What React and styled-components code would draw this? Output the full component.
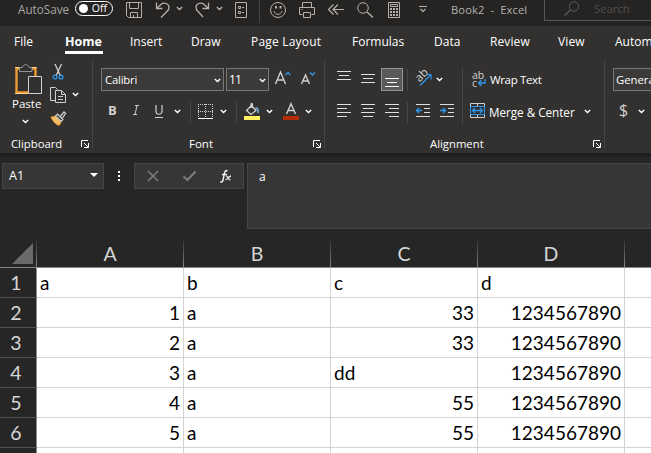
import React from "react";
import styled, { createGlobalStyle } from "styled-components";

const Global = createGlobalStyle`
  * { box-sizing: border-box; }
  body { margin: 0; background: #262626; overflow: hidden; }
`;

const Window = styled.div`
  width: 651px;
  height: 453px;
  overflow: hidden;
  display: flex;
  flex-direction: column;
  background: #262626;
  color: #fff;
  font-family: "Open Sans", "Noto Sans", sans-serif;
  font-size: 12px;
`;

const Row = styled.div`
  display: flex;
  align-items: flex-start;
  flex: none;
  height: ${(p) => (p.$h ? `${p.$h}px` : "auto")};
  margin-top: ${(p) => p.$top || 0}px;
  padding-left: ${(p) => p.$pad || 0}px;
`;

const Glyph = styled.svg`
  display: block;
  flex: none;
  overflow: visible;
  margin-left: ${(p) => p.$gap || 0}px;
  margin-top: ${(p) => p.$top || 0}px;
  fill: none;
  stroke: ${(p) => p.$color || "#d2d0ce"};
  stroke-width: 1;
`;

const Label = styled.span`
  flex: none;
  width: ${(p) => p.$w}px;
  margin-left: ${(p) => p.$gap || 0}px;
  margin-top: ${(p) => p.$top || 0}px;
  height: 18px;
  line-height: 18px;
  white-space: pre;
  color: ${(p) => p.$color || "#fff"};
  font-size: ${(p) => p.$size || 12}px;
  font-weight: ${(p) => p.$weight || 400};
  letter-spacing: ${(p) => p.$track || 0}px;
`;

const Rule = styled.div`
  flex: none;
  width: 1px;
  height: ${(p) => p.$h}px;
  margin-left: ${(p) => p.$gap || 0}px;
  margin-top: ${(p) => p.$top || 0}px;
  background: #484644;
`;

/* Title bar */
const TitleBar = styled.header`
  display: flex;
  flex: none;
  height: 26px;
  padding-left: 18px;
  background: #252423;
`;

const Toggle = styled.div`
  flex: none;
  width: 38px;
  height: 15px;
  margin: 1px 0 0 7px;
  padding: 0 5px 0 3px;
  border: 1px solid #fff;
  border-radius: 8px;
  display: flex;
  align-items: center;
  justify-content: space-between;
  font-size: 10.5px;
  font-weight: 500;
  line-height: 13px;
`;

const Knob = styled.i`
  width: 9px;
  height: 9px;
  border-radius: 50%;
  background: #fff;
`;

const SearchBox = styled.div`
  display: flex;
  flex: none;
  width: 110px;
  height: 21px;
  margin-left: 15px;
  border-left: 1px solid #575655;
  border-bottom: 1px solid #575655;
`;

/* Ribbon */
const Ribbon = styled.section`
  flex: none;
  height: 127px;
  background: #323130;
  overflow: hidden;
`;

const Tabs = styled.nav`
  display: flex;
  height: 33px;
  padding: 7px 0 0 14px;
`;

const Tab = styled.span`
  flex: none;
  width: ${(p) => p.$w}px;
  margin-right: ${(p) => p.$gap}px;
  height: 21px;
  line-height: 18px;
  font-size: ${(p) => (p.$active ? 12.5 : 12)}px;
  white-space: nowrap;
  letter-spacing: ${(p) => p.$track || 0}px;
  font-weight: ${(p) => (p.$active ? 700 : 400)};
  border-bottom: ${(p) => (p.$active ? "3px solid #fff" : "none")};
`;

const Groups = styled.div`
  display: flex;
  height: 94px;
`;

const Group = styled.div`
  flex: none;
  width: ${(p) => p.$w}px;
  height: 94px;
  display: flex;
  flex-direction: column;
`;

const Caption = styled.div`
  display: flex;
  height: 18px;
  margin-top: auto;
`;

const PasteButton = styled.div`
  flex: none;
  width: 36px;
  margin-left: 8px;
`;

const ClipTools = styled.div`
  flex: none;
  width: 34px;
  margin-left: 6px;
`;

const AlignmentTools = styled.div`
  flex: none;
  width: ${(p) => p.$w}px;
  height: 67px;
`;

const Combo = styled.div`
  display: flex;
  flex: none;
  width: ${(p) => p.$w}px;
  height: 23px;
  margin-left: ${(p) => p.$gap}px;
  margin-top: 9px;
  border: 1px solid #797775;
  background: #3b3a39;
`;

const Pressed = styled.div`
  flex: none;
  width: 22px;
  height: 23px;
  margin: 9px 0 0 6px;
  border: 1px solid #979593;
  background: #5b5a58;
`;

/* Formula bar */
const FormulaBar = styled.section`
  display: flex;
  flex: none;
  height: 87px;
  padding: 10px 0 0 2px;
  background: linear-gradient(#1b1b1b 0, #212121 3px, #262626 7px);
`;

const Field = styled.div`
  display: flex;
  flex: none;
  width: ${(p) => p.$w}px;
  height: ${(p) => p.$h}px;
  margin-left: ${(p) => p.$gap || 0}px;
  border: 1px solid #464646;
  background: #363636;
`;

/* Sheet */
const Sheet = styled.main`
  flex: none;
  display: grid;
  grid-template-columns: 37px 147px 147px 147px 147px 30px;
  grid-template-rows: 28px repeat(7, 30px);
  height: 213px;
  overflow: hidden;
  font-family: "Lato", sans-serif;
  font-size: 19px;
`;

const ColumnHead = styled.div`
  line-height: 28px;
  height: 28px;
  text-align: center;
  color: #d6d6d6;
  font-size: 19.5px;
  border-right: 1px solid;
  border-bottom: 1px solid;
  border-image: linear-gradient(#303030, #888) 1;
`;

const RowHead = styled.div`
  line-height: 29px;
  text-align: center;
  padding-right: 4px;
  color: #d6d6d6;
  font-size: 19.5px;
  background: #262626;
  border-right: 1px solid #8a8a8a;
  border-bottom: 1px solid #505050;
`;

const Cell = styled.div`
  line-height: 29px;
  padding: 0 3px;
  color: #000;
  background: #fff;
  text-align: ${(p) => (p.$number ? "right" : "left")};
  border-right: 1px solid #d4d4d4;
  border-bottom: 1px solid #d4d4d4;
`;

const Chevron = ({ gap, top, color = "#fff" }) => (
  <Glyph $gap={gap} $top={top} $color={color} width="7" height="5" viewBox="0 0 7 5">
    <path d="M.8 1l2.700 2.500L6.200 1" strokeWidth="1.4" />
  </Glyph>
);

const Launcher = ({ gap }) => (
  <Glyph $gap={gap} $top={5} $color="#fff" width="8" height="8" viewBox="0 0 8 8">
    <path d="M.5 7V.5H7M3 3l4 4M7.500 3v4.500H3" />
  </Glyph>
);

const Lines = ({ rows, gap, top, color = "#e1dfdd" }) => (
  <Glyph $gap={gap} $top={top} $color={color} width="14" height="14" viewBox="0 0 14 14">
    <path d={rows.map(([x, y, w]) => `M${x} ${y + 0.5}h${w}`).join("")} />
  </Glyph>
);

const LEFT = [[0, 0, 14], [0, 4, 10], [0, 8, 14], [0, 12, 10]];
const CENTER = [[0, 0, 14], [2, 4, 10], [0, 8, 14], [2, 12, 10]];
const RIGHT = [[0, 0, 14], [4, 4, 10], [0, 8, 14], [4, 12, 10]];
const STACK = [[0, 0, 14], [2, 4, 10], [0, 8, 14]];

const Indent = ({ gap, right }) => (
  <Glyph $gap={gap} $top={5} width="14" height="14" viewBox="0 0 14 14">
    <path d="M0 .5h14M8 4.500h6M8 8.500h6M0 12.500h14" stroke="#e1dfdd" />
    <path
      d={right ? "M0 6.500h5M3 4l2.500 2.500L3 9" : "M1 6.500h5M3 4L.5 6.500 3 9"}
      stroke="#2f96ea"
      strokeWidth="1.4"
    />
  </Glyph>
);

const ROWS = [
  ["a", "b", "c", "d"],
  [1, "a", 33, 1234567890],
  [2, "a", 33, 1234567890],
  [3, "a", "dd", 1234567890],
  [4, "a", 55, 1234567890],
  [5, "a", 55, 1234567890],
  ["", "", "", ""],
];

const TABS = [
  ["File", 19, 32, 0],
  ["Home", 38, 27, 0],
  ["Insert", 32, 29, 0],
  ["Draw", 30, 30, 0],
  ["Page Layout", 71, 30, 0.2],
  ["Formulas", 54, 28, 0],
  ["Data", 27, 29, 0],
  ["Review", 41, 27, 0.1],
  ["View", 28, 29, 0.1],
  ["Automate", 60, 0, 0],
];

function QuickAccess() {
  const c = "#b3b0ad";
  return (
    <TitleBar>
      <Label $w={50} $color="#a6a5a4" $size={11.700}>AutoSave</Label>
      <Toggle><Knob />Off</Toggle>
      <Glyph $gap={13} $top={2} $color={c} width="16" height="16" viewBox="0 0 16 16">
        <path d="M.5.5h15v15H2.500l-2-2zM3.500.5v6h9v-6M4.500 15.500v-5h7v5M7.500 13v2.500" />
      </Glyph>
      <Glyph $gap={13} $top={2} $color={c} width="16" height="16" viewBox="0 0 16 16">
        <path d="M1.500.5v6h6M2 6l4-3.600c3-2.600 8-.8 8 3.100 0 1.500-.6 2.500-1.600 3.500L6 15.500" strokeWidth="1.3" />
      </Glyph>
      <Chevron gap={5} top={6} color={c} />
      <Glyph $gap={12} $top={2} $color={c} width="16" height="16" viewBox="0 0 16 16">
        <path d="M13.500.5v6h-6M13 6L9 2.400C6 -.2 1 1.600 1 5.500c0 1.500.6 2.500 1.600 3.500L8 15" strokeWidth="1.3" />
      </Glyph>
      <Chevron gap={5} top={6} color={c} />
      <Glyph $gap={12} $top={2} $color={c} width="12" height="16" viewBox="0 0 12 16">
        <path d="M.5.5h11v15H.5zM3.500 4.500h2v2h-2zM3.500 9.500h2v2h-2zM7 5.500h2M7 10.500h2" />
      </Glyph>
      <Rule $h={23} $gap={12} />
      <Glyph $gap={10} $top={2} $color={c} width="16" height="16" viewBox="0 0 16 16">
        <circle cx="8" cy="8" r="7.500" />
        <path d="M4 9c1 4.500 7 4.500 8 0" />
        <path d="M5 4h2v2.500H5zM9.500 4h2v2.500h-2z" fill={c} stroke="none" />
      </Glyph>
      <Glyph $gap={13} $top={2} $color={c} width="16" height="16" viewBox="0 0 16 16">
        <path d="M3.500 5.500v-5h9v5M3.500 12.500h-3v-7h15v7h-3M4.500 10.500h7v5h-7zM2.500 7.500h1" />
      </Glyph>
      <Glyph $gap={13} $top={4} $color={c} width="16" height="12" viewBox="0 0 16 12">
        <path d="M16 5.500H5M5.500.5l-5 5 5 5M10 .5l-5 5 5 5" strokeWidth="1.2" />
      </Glyph>
      <Glyph $gap={13} $top={2} $color={c} width="16" height="16" viewBox="0 0 16 16">
        <circle cx="6" cy="6" r="5.300" />
        <path d="M10 10l6 5.500" strokeWidth="1.5" />
      </Glyph>
      <Glyph $gap={15} $top={2} $color={c} width="12" height="16" viewBox="0 0 12 16">
        <path d="M.5.5h11v15H.5zM2.500 2.500h7v2h-7z" />
        <path d="M2 7h8M2 10h8M2 13h8" strokeWidth="2" strokeDasharray="2 1" />
      </Glyph>
      <Glyph $gap={19} $top={6} $color={c} width="8" height="7" viewBox="0 0 8 7">
        <path d="M0 .5h8M1.500 3L4 5.500 6.500 3" strokeWidth="1.2" />
      </Glyph>
      <Label $w={78} $gap={24} $top={1} $color="#b3b0ad" $size={11.200} $track={0.1}>Book2  -  Excel</Label>
      <SearchBox>
        <Glyph $gap={20} $top={1} $color="#5d5b59" width="16" height="16" viewBox="0 0 16 16">
          <circle cx="9" cy="5.500" r="4.700" />
          <path d="M5.500 9l-6 5.500" strokeWidth="1.300" />
        </Glyph>
        <Label $w={36} $gap={13} $color="#504e4c" $size={11.300}>Search</Label>
      </SearchBox>
    </TitleBar>
  );
}

function Clipboard() {
  return (
    <Group $w={92}>
      <Row>
        <PasteButton>
          <Glyph $gap={7} $top={5} width="28" height="30" viewBox="0 0 28 30">
            <path d="M5 4.500H1.500v24H13M17 4.500h3.500V12" stroke="#ed9b33" strokeWidth="2.4" />
            <path d="M0 3.500h5M17 3.500h4.500M0 29.500h13" stroke="#ffd991" />
            <path d="M4.500 7.500v-4h3C8-.3 13.500-.3 14 3.500h3v4z" stroke="#979593" fill="#323130" />
            <path d="M13.500 12.500h13v17h-13z" fill="#323130" stroke="#d2d0ce" />
          </Glyph>
          <Label as="div" $w={30} $gap={4} $top={1} $size={11.500}>Paste</Label>
          <Chevron gap={14} top={6} />
        </PasteButton>
        <ClipTools>
          <Glyph $gap={3} $top={5} width="11" height="16" viewBox="0 0 11 16">
            <path d="M2 0l5.500 12M8.500 0L3 12" strokeWidth="1.3" />
            <circle cx="2" cy="13" r="1.900" stroke="#2f96ea" strokeWidth="1.3" />
            <circle cx="8" cy="13" r="1.900" stroke="#2f96ea" strokeWidth="1.3" />
          </Glyph>
          <Row>
            <Glyph $top={7} width="16" height="16" viewBox="0 0 16 16">
              <path d="M5 13.500H.5V.5h5l2 2M5.500 3.500h6l4 4v8h-10zM11.500 3.500v4h4M8 9.500h5M8 12.500h5" />
            </Glyph>
            <Chevron gap={6} top={12} />
          </Row>
          <Glyph $gap={1} $top={8} width="16" height="16" viewBox="0 0 16 16">
            <path d="M0 6l4.500-.5 5.500 5.800L8 14.500C4 13 1.500 9.500 0 6z" fill="#f4bd68" stroke="#ed9b33" />
            <path d="M4.500 5l2-2L12 8.500l-2 2zM9.500 5L13 .8l1.700 1.500L11.500 7" strokeWidth="1.2" fill="#484644" />
          </Glyph>
        </ClipTools>
      </Row>
      <Caption>
        <Label $w={51} $gap={11} $size={11.300} $weight={500}>Clipboard</Label>
        <Launcher gap={19} />
      </Caption>
    </Group>
  );
}

function FontGroup() {
  return (
    <Group $w={231}>
      <Row $h={39}>
        <Combo $w={123} $gap={8}>
          <Label $w={40} $gap={3} $top={2} $size={11.300} $track={-0.2}>Calibri</Label>
          <Chevron gap={69} top={9} />
        </Combo>
        <Combo $w={43} $gap={2}>
          <Label $w={15} $gap={2} $top={2} $size={12} $track={-0.8}>11</Label>
          <Chevron gap={15} top={9} />
        </Combo>
        <Glyph $gap={6} $top={12} width="15" height="14" viewBox="0 0 15 14">
          <path d="M.5 13L5.500 1l5 12M2.500 9h6" strokeWidth="1.4" />
          <path d="M10.500 4L13 1.500 15.500 4" stroke="#2f96ea" strokeWidth="1.4" />
        </Glyph>
        <Glyph $gap={11} $top={12} width="14" height="14" viewBox="0 0 14 14">
          <path d="M.5 13L4.500 4l4 9M2 10h5" strokeWidth="1.4" />
          <path d="M9 1.500L11.500 4 14 1.500" stroke="#2f96ea" strokeWidth="1.4" />
        </Glyph>
      </Row>
      <Row $h={30} $pad={15}>
        <Label $w={10} $top={3} $size={13} $weight={700} $color="#d2d0ce">B</Label>
        <Glyph $gap={15} $top={7} width="6" height="10" viewBox="0 0 6 10">
          <path d="M2 .5h4M0 9.500h4M4 .5l-2 9" />
        </Glyph>
        <Glyph $gap={16} $top={7} width="8" height="13" viewBox="0 0 8 13">
          <path d="M1 0v6c0 4.300 6 4.300 6 0V0M0 12.500h8" strokeWidth="1.200" />
        </Glyph>
        <Chevron gap={11} top={11} />
        <Rule $h={21} $gap={9} $top={4} />
        <Glyph $gap={7} $top={6} width="15" height="15" viewBox="0 0 15 15">
          <path d="M0 .5h15M0 7.500h15M.5 0v14M7.500 0v14M14.500 0v14" strokeDasharray="1 1" />
          <path d="M0 14.500h15" stroke="#fff" />
        </Glyph>
        <Chevron gap={7} top={11} />
        <Rule $h={21} $gap={9} $top={4} />
        <Glyph $gap={7} $top={5} width="16" height="17" viewBox="0 0 16 17">
          <path d="M2.500 7.500l5-5 4.500 5-5 4zM7 5V1.500c0-1 1.500-1 1.500 0V5" strokeWidth="1.3" />
          <path d="M11.500 5c2.500-.2 3 2 2.500 5" stroke="#6c9fcb" strokeWidth="2" />
          <path d="M0 13h16v4H0z" fill="#fff160" stroke="none" />
        </Glyph>
        <Chevron gap={6} top={11} />
        <Glyph $gap={10} $top={5} width="16" height="17" viewBox="0 0 16 17">
          <path d="M3.500 11L8 .8 12.500 11M5 7.500h6" strokeWidth="1.4" />
          <path d="M0 13h16v4H0z" fill="#b32d07" stroke="none" />
        </Glyph>
        <Chevron gap={6} top={11} />
      </Row>
      <Caption>
        <Label $w={24} $gap={96} $size={11.500} $weight={500}>Font</Label>
        <Launcher gap={100} />
      </Caption>
    </Group>
  );
}

function AlignmentGroup() {
  return (
    <Group $w={279}>
      <Row>
        <AlignmentTools $w={137}>
          <Row $h={39}>
            <Lines rows={STACK} gap={12} top={12} />
            <Lines rows={STACK} gap={10} top={15} />
            <Pressed><Lines rows={STACK} gap={3} top={9} color="#fff" /></Pressed>
            <Rule $h={22} $gap={4} $top={10} />
            <Glyph $gap={7} $top={11} width="17" height="16" viewBox="0 0 17 16">
              <text transform="translate(4.500 12.500) rotate(-45)" fill="#d2d0ce" stroke="none" fontSize="11.500">ab</text>
              <path d="M5 15.500L15.500 5M11 4.500h5v5" stroke="#2f96ea" strokeWidth="1.2" />
            </Glyph>
            <Chevron gap={4} top={18} />
          </Row>
          <Row $h={28}>
            <Lines rows={LEFT} gap={12} top={6} />
            <Lines rows={CENTER} gap={10} top={6} />
            <Lines rows={RIGHT} gap={10} top={6} />
            <Rule $h={21} $gap={8} $top={4} />
            <Row $top={1}>
              <Indent gap={8} />
              <Indent gap={10} right />
            </Row>
          </Row>
        </AlignmentTools>
        <Rule $h={58} $top={8} />
        <AlignmentTools $w={138}>
          <Row $h={39}>
            <Glyph $gap={9} $top={13} width="14" height="16" viewBox="0 0 14 16">
              <text x="0" y="7" fill="#d2d0ce" stroke="none" fontSize="10.500">ab</text>
              <text x="0" y="14.500" fill="#d2d0ce" stroke="none" fontSize="10.500">c</text>
              <path d="M13 7v4H7M9.500 8L6.500 11l3 3" stroke="#2f96ea" strokeWidth="1.4" />
            </Glyph>
            <Label $w={54} $gap={4} $top={12} $size={11.500} $track={-0.35}>Wrap Text</Label>
          </Row>
          <Row $h={28}>
            <Glyph $gap={7} $top={5} width="15" height="15" viewBox="0 0 15 15">
              <path d="M.5.5h14v14H.5zM7.500 0v3M7.500 12v3" />
              <path d="M.5 3.500h14v8H.5z" fill="#323130" stroke="#2f96ea" />
              <path d="M2.500 7.500h10M5 5L2.500 7.500 5 10M10 5l2.500 2.500L10 10" stroke="#2f96ea" strokeWidth="1.3" />
            </Glyph>
            <Label $w={86} $gap={4} $top={5} $size={11.700} $track={-0.02}>{"Merge & Center"}</Label>
            <Chevron gap={9} top={11} />
          </Row>
        </AlignmentTools>
      </Row>
      <Caption>
        <Label $w={53} $gap={105} $size={11.300} $weight={500}>Alignment</Label>
        <Launcher gap={110} />
      </Caption>
    </Group>
  );
}

function NumberGroup() {
  return (
    <Group $w={46}>
      <Row $h={39}>
        <Combo $w={60} $gap={8}>
          <Label $w={42} $gap={2} $top={2} $size={11.300}>General</Label>
        </Combo>
      </Row>
      <Row $h={30}>
        <Label $w={9} $gap={14} $top={3} $size={16} $color="#d2d0ce">$</Label>
        <Chevron gap={10} top={11} />
      </Row>
    </Group>
  );
}

export default function App() {
  return (
    <Window>
      <Global />
      <QuickAccess />
      <Ribbon>
        <Tabs>
          {TABS.map(([name, w, gap, track]) => (
            <Tab key={name} $w={w} $gap={gap} $track={track} $active={name === "Home"}>{name}</Tab>
          ))}
        </Tabs>
        <Groups>
          <Clipboard />
          <Rule $h={88} $top={1} />
          <FontGroup />
          <Rule $h={88} $top={1} />
          <AlignmentGroup />
          <Rule $h={88} $top={1} />
          <NumberGroup />
        </Groups>
      </Ribbon>
      <FormulaBar>
        <Field $w={102} $h={26}>
          <Label $w={17} $gap={6} $top={3} $size={12.500}>A1</Label>
          <Glyph $gap={64} $top={9} width="8" height="4" viewBox="0 0 8 4">
            <path d="M0 0h8L4 4z" fill="#fff" stroke="none" />
          </Glyph>
        </Field>
        <Glyph $gap={14} $top={8} width="2" height="10" viewBox="0 0 2 10">
          <path d="M0 0h2v2H0zM0 4h2v2H0zM0 8h2v2H0z" fill="#fff" stroke="none" />
        </Glyph>
        <Field $w={110} $h={26} $gap={14}>
          <Glyph $gap={13} $top={7} $color="#7b7b7b" width="10" height="10" viewBox="0 0 10 10">
            <path d="M0 0l10 10M10 0L0 10" strokeWidth="1.6" />
          </Glyph>
          <Glyph $gap={25} $top={7} $color="#7b7b7b" width="13" height="10" viewBox="0 0 13 10">
            <path d="M.5 5.500L4.500 9l8-8.500" strokeWidth="2.200" />
          </Glyph>
          <Glyph $gap={24} $top={6} $color="#eee" width="12" height="13" viewBox="0 0 12 13">
            <path d="M7.500 1C5.500-.2 4.700 1.500 4.300 4L3 10c-.4 2-1.500 2.500-2.800 1.600M2 4.500h5" strokeWidth="1.5" />
            <path d="M6 6.200c2-1 2 4.500 4.500 3.500M11 6C9 6 7.500 9.800 5.500 9.800" strokeWidth="1.3" />
          </Glyph>
        </Field>
        <Field $w={410} $h={66} $gap={3}>
          <Label $w={10} $gap={11} $top={4} $size={12}>a</Label>
        </Field>
      </FormulaBar>
      <Sheet>
        <ColumnHead>
          <Glyph $gap={12} $top={3} width="21" height="21" viewBox="0 0 21 21">
            <path d="M21 0v21H0z" fill="#6a6a6a" stroke="none" />
          </Glyph>
        </ColumnHead>
        {["A", "B", "C", "D", ""].map((name) => <ColumnHead key={name}>{name}</ColumnHead>)}
        {ROWS.map((cells, i) => (
          <React.Fragment key={i}>
            <RowHead>{i < 6 ? i + 1 : ""}</RowHead>
            {cells.map((value, j) => <Cell key={j} $number={typeof value === "number"}>{value}</Cell>)}
            <Cell />
          </React.Fragment>
        ))}
      </Sheet>
    </Window>
  );
}
